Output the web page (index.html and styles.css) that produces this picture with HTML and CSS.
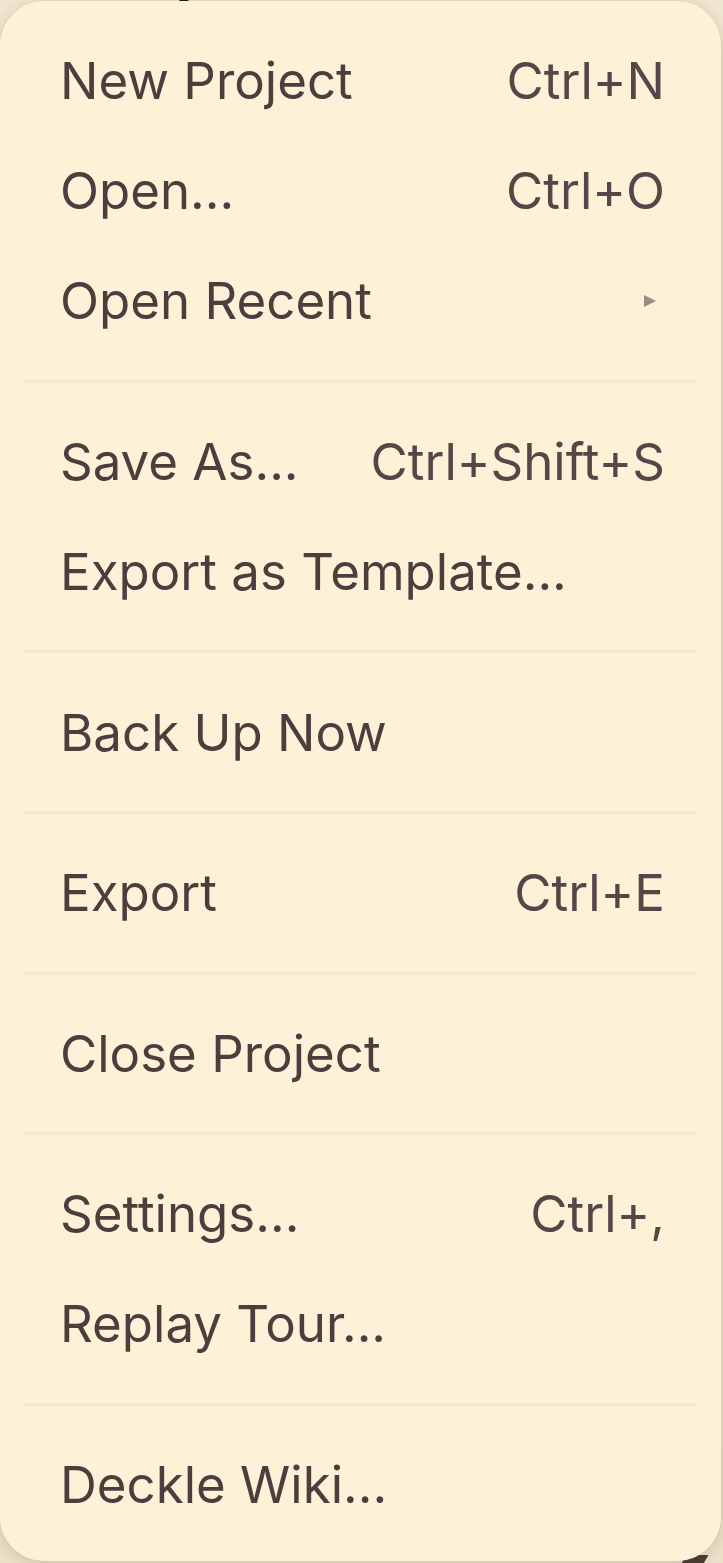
FILE: index.html
```html
<!DOCTYPE html>
<html lang="en">
<head>
<meta charset="utf-8">
<title>File menu</title>
<link rel="stylesheet" href="styles.css">
</head>
<body>
<div class="page">
  <div class="backdrop-title">Project Dashboard</div>
  <div class="backdrop-mark"></div>

  <div class="menu" role="menu">
    <div class="item"><span class="label">New Project</span><span class="shortcut">Ctrl+N</span></div>
    <div class="item"><span class="label">Open...</span><span class="shortcut">Ctrl+O</span></div>
    <div class="item"><span class="label">Open Recent</span><span class="arrow"></span></div>
    <div class="sep"></div>
    <div class="item"><span class="label">Save As...</span><span class="shortcut">Ctrl+Shift+S</span></div>
    <div class="item"><span class="label">Export as Template...</span></div>
    <div class="sep"></div>
    <div class="item"><span class="label">Back Up Now</span></div>
    <div class="sep"></div>
    <div class="item"><span class="label">Export</span><span class="shortcut">Ctrl+E</span></div>
    <div class="sep"></div>
    <div class="item"><span class="label">Close Project</span></div>
    <div class="sep"></div>
    <div class="item"><span class="label">Settings...</span><span class="shortcut">Ctrl+,</span></div>
    <div class="item"><span class="label">Replay Tour...</span></div>
    <div class="sep"></div>
    <div class="item"><span class="label">Deckle Wiki...</span></div>
  </div>
</div>
</body>
</html>
```

FILE: styles.css
```css
html, body {
  margin: 0;
  padding: 0;
}

body {
  background: #ede3ca;
  font-family: Inter, "Noto Sans", "Liberation Sans", sans-serif;
  overflow: hidden;
}

.page {
  position: relative;
  width: 723px;
  height: 1563px;
  overflow: hidden;
  background: linear-gradient(180deg, #efe6cf 0%, #ece2c9 100%);
}

.backdrop-title {
  position: absolute;
  top: -42px;
  left: 84px;
  font-size: 52px;
  font-weight: 800;
  color: #1c1512;
  line-height: 46px;
  white-space: nowrap;
  letter-spacing: 2px;
}

.backdrop-mark {
  position: absolute;
  right: 18px;
  bottom: -4px;
  width: 22px;
  height: 12px;
  background: #4a3a34;
  transform: skewX(-30deg);
}

.menu {
  position: absolute;
  top: 1px;
  left: 0;
  width: 721px;
  box-sizing: border-box;
  padding: 25px 24px 21px;
  background: #fcf2d8;
  border-radius: 44px;
  box-shadow: 0 4px 16px rgba(90, 70, 40, 0.18), 0 0 0 1px rgba(150, 125, 90, 0.06);
  display: flex;
  flex-direction: column;
}

.item {
  height: 110px;
  padding: 0 32px 0 36px;
  display: flex;
  align-items: center;
  justify-content: space-between;
  font-size: 51px;
  line-height: 1.2;
  color: #4b3f3e;
  white-space: nowrap;
}

.shortcut {
  color: #534847;
}

.arrow {
  width: 0;
  height: 0;
  margin-right: 9px;
  border-left: 12px solid #9a8f87;
  border-top: 6.5px solid transparent;
  border-bottom: 6.5px solid transparent;
}

.sep {
  height: 3px;
  margin: 23.8px 0;
  background: #f3e8cf;
}
```
